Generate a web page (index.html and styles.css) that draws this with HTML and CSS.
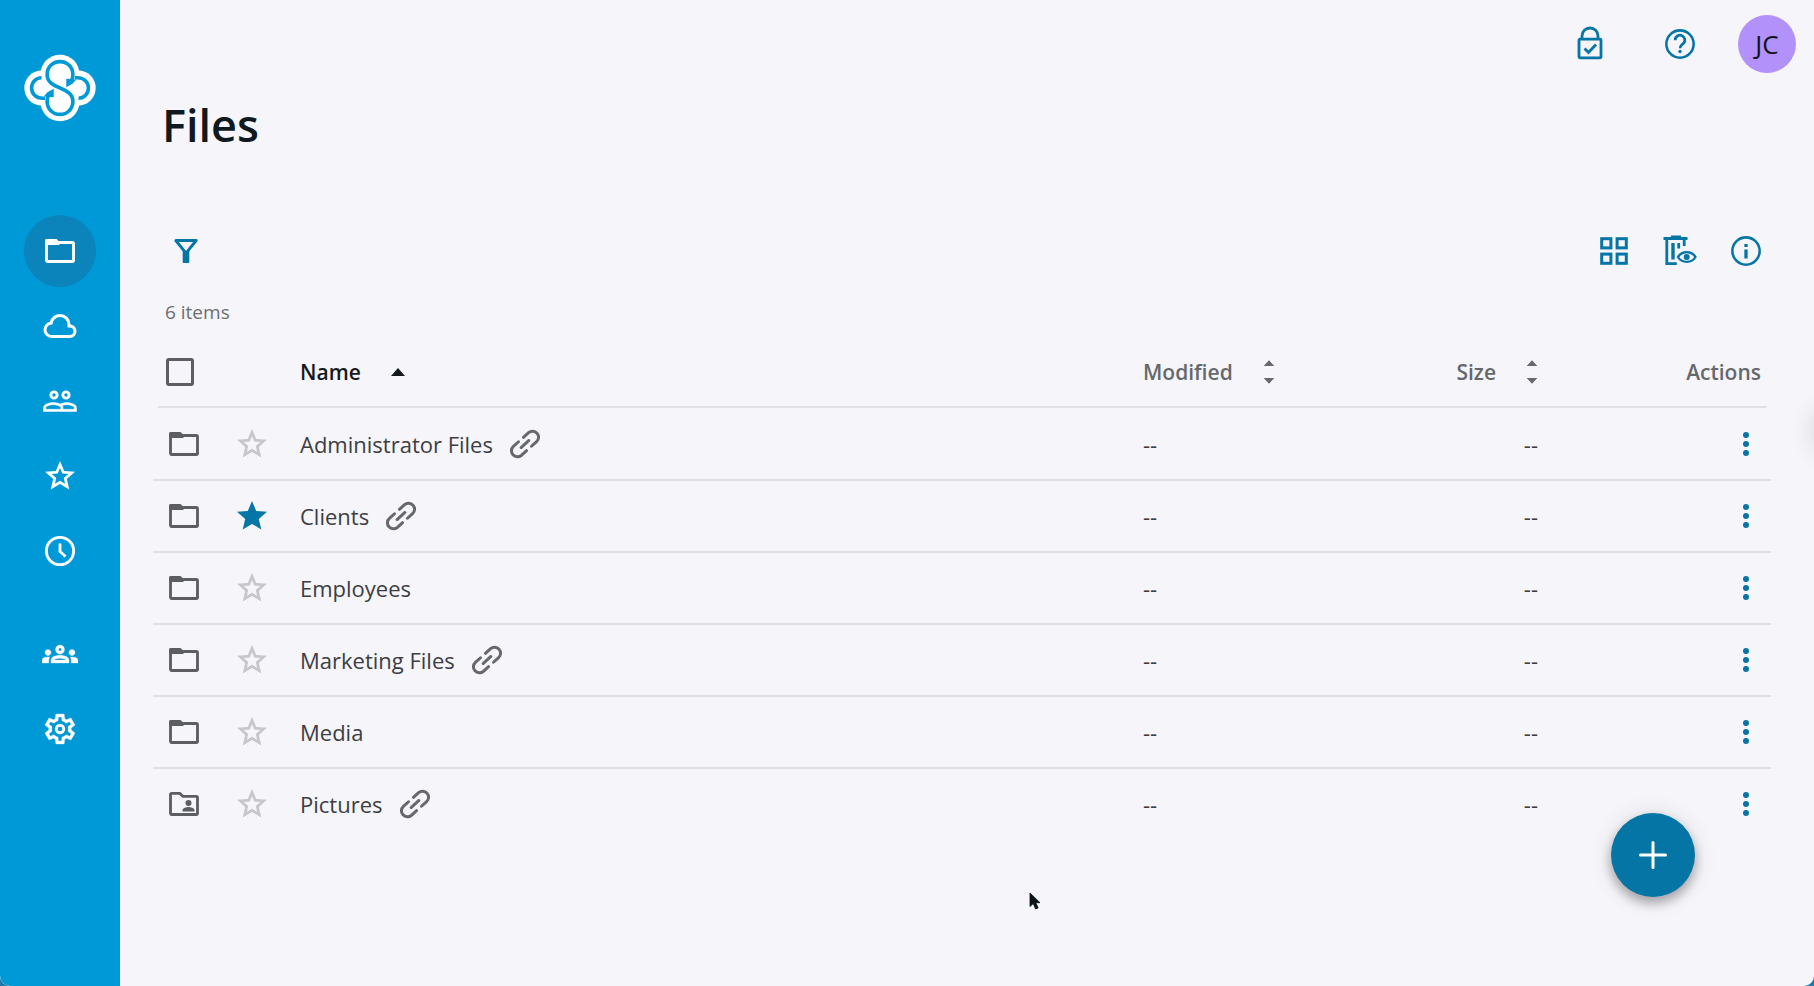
FILE: index.html
```html
<!DOCTYPE html>
<html lang="en">
<head>
    <meta charset="UTF-8">
    <meta name="viewport" content="width=device-width, initial-scale=1.0">
    <title>Files</title>
    <link rel="stylesheet" href="styles.css">
</head>
<body>
    <!-- Shared icons -->
    <svg class="sprite" aria-hidden="true">
        <symbol id="folder" viewBox="0 0 24 24">
            <path d="M3 5h6.5l1.5 2H3z" fill="currentColor" stroke="currentColor" stroke-width="1.9" stroke-linejoin="round"/>
            <rect x="3" y="6.3" width="18" height="12.7" rx="0.8" fill="none" stroke="currentColor" stroke-width="1.9"/>
        </symbol>
        <symbol id="folder-shared" viewBox="0 0 24 24">
            <path d="M3.8 4.9h5.4l2 2h9a.8.8 0 0 1 .8.8v10.5a.8.8 0 0 1-.8.8H3.8a.8.8 0 0 1-.8-.8V5.7a.8.8 0 0 1 .8-.8z" fill="none" stroke="currentColor" stroke-width="1.9"/>
            <circle cx="15" cy="11.3" r="2" fill="currentColor"/>
            <path d="M11 17v-1c0-1.4 2.6-2 4-2s4 .6 4 2v1z" fill="currentColor"/>
        </symbol>
        <symbol id="star" viewBox="0 0 24 24">
            <path d="M22 9.24l-7.19-.62L12 2 9.19 8.63 2 9.24l5.46 4.73L5.82 21 12 17.27 18.18 21l-1.63-7.03L22 9.24zM12 15.1l-3.4 2.05.9-3.85-3-2.6 3.95-.35L12 6.7l1.55 3.65 3.95.35-3 2.6.9 3.85L12 15.1z" fill="currentColor"/>
        </symbol>
        <symbol id="star-full" viewBox="0 0 24 24">
            <path d="M12 17.27L18.18 21l-1.64-7.03L22 9.24l-7.19-.61L12 2 9.19 8.63 2 9.24l5.46 4.73L5.82 21z" fill="currentColor"/>
        </symbol>
        <symbol id="link" viewBox="0 0 24 24">
            <g transform="rotate(-42 12 12)" fill="none" stroke="currentColor" stroke-width="2" stroke-linecap="round">
                <path d="M9.8 8H5.2a4 4 0 0 0 0 8h4.6M14.2 8h4.6a4 4 0 0 1 0 8h-4.6M8.5 12h7"/>
            </g>
        </symbol>
        <symbol id="dots" viewBox="0 0 24 24">
            <g fill="currentColor">
                <circle cx="12" cy="6" r="2"/>
                <circle cx="12" cy="12" r="2"/>
                <circle cx="12" cy="18" r="2"/>
            </g>
        </symbol>
        <symbol id="sort" viewBox="0 0 12 24">
            <path d="M0.7 6L6 0.3 11.3 6zM0.7 18L6 23.7 11.3 18z" fill="currentColor"/>
        </symbol>
    </svg>

    <nav class="sidebar" aria-label="Main">
        <a class="logo" href="#" aria-label="Home">
            <svg viewBox="10 14 218 204">
                <g fill="#fff">
                    <circle cx="119" cy="74" r="59"/>
                    <circle cx="119" cy="158" r="59"/>
                    <circle cx="64" cy="116" r="53"/>
                    <circle cx="174" cy="116" r="53"/>
                </g>
                <g fill="none" stroke="#0099d8" stroke-width="11">
                    <path d="M145 103C154 97 158 87 158 75C158 53 141 36 119 36S80 53 80 75C80 98 99 108 119 116S158 134 158 157C158 179 141 196 119 196S80 179 80 157C80 145 84 135 93 129"/>
                    <path d="M63 85C46 85 33 99 33 116S46 147 66 147H74"/>
                    <path d="M175 147C192 147 205 133 205 116S192 85 172 85H164"/>
                </g>
                <path d="M138 88L168 90 158 102 138 114zM100 144V118L80 130 70 142z" fill="#0099d8"/>
            </svg>
        </a>

        <div class="menu">
            <a class="item active" href="#" aria-label="Files"><svg class="icon"><use href="#folder"/></svg></a>
            <a class="item" href="#" aria-label="Cloud">
                <svg class="icon" viewBox="0 0 24 24"><path fill-rule="evenodd" fill="currentColor" d="M6.5 20Q4.2 20 2.6 18.4 1 16.9 1 14.6 1 12.6 2.2 11.1 3.4 9.6 5.3 9.2 5.9 6.9 7.8 5.4 9.6 4 12 4 14.9 4 17 6 19 8.1 19 11 20.7 11.2 21.9 12.5 23 13.8 23 15.5 23 17.4 21.7 18.7 20.4 20 18.5 20ZM6.5 18h12q1.05 0 1.77-.73.73-.72.73-1.77 0-1.05-.73-1.77Q19.55 13 18.5 13H17v-2q0-2.08-1.46-3.54Q14.08 6 12 6 9.93 6 8.46 7.46 7 8.93 7 11h-.5q-1.45 0-2.47 1.03Q3 13.05 3 14.5q0 1.45 1.03 2.48Q5.05 18 6.5 18Z"/></svg>
            </a>
            <a class="item" href="#" aria-label="People">
                <svg class="icon" viewBox="0 0 24 24"><path fill="currentColor" stroke="currentColor" stroke-width="0.3" d="M16.5 13c-1.2 0-3.07.34-4.5 1-1.43-.67-3.3-1-4.5-1C5.33 13 1 14.08 1 16.25V19h22v-2.75c0-2.17-4.33-3.25-6.5-3.25zm-4 4.5h-10v-1.25c0-.54 2.56-1.75 5-1.75s5 1.21 5 1.75v1.25zm9 0H14v-1.25c0-.46-.2-.86-.52-1.22.88-.3 1.96-.53 3.02-.53 2.44 0 5 1.21 5 1.75v1.25z"/><g fill="none" stroke="currentColor" stroke-width="1.9"><circle cx="8" cy="8" r="2.1"/><circle cx="16" cy="8" r="2.1"/></g></svg>
            </a>
            <a class="item" href="#" aria-label="Starred"><svg class="icon"><use href="#star"/></svg></a>
            <a class="item" href="#" aria-label="Recent">
                <svg class="icon" viewBox="0 0 24 24"><g fill="none" stroke="currentColor" stroke-width="1.9"><circle cx="12" cy="12" r="9.1"/><path d="M12 7v5.3l3.7 3.4"/></g></svg>
            </a>
        </div>

        <div class="menu">
            <a class="item" href="#" aria-label="Groups">
                <svg class="icon" viewBox="0 0 24 24"><path fill="currentColor" stroke="currentColor" stroke-width="0.2" d="M4 13c1.1 0 2-.9 2-2s-.9-2-2-2-2 .9-2 2 .9 2 2 2zm1.13 1.1c-.37-.06-.74-.1-1.13-.1-.99 0-1.93.21-2.78.58C.48 14.9 0 15.62 0 16.43V18h4.5v-1.61c0-.83.23-1.61.63-2.29zM20 13c1.1 0 2-.9 2-2s-.9-2-2-2-2 .9-2 2 .9 2 2 2zm4 3.43c0-.81-.48-1.53-1.22-1.85-.85-.37-1.79-.58-2.78-.58-.39 0-.76.04-1.13.1.4.68.63 1.46.63 2.29V18H24v-1.57zM16.24 13.65c-1.17-.52-2.61-.9-4.24-.9s-3.07.39-4.24.9C6.68 14.13 6 15.21 6 16.39V18h12v-1.61c0-1.18-.68-2.26-1.76-2.74zM8.07 16c.09-.23.13-.39.91-.69.97-.38 1.99-.56 3.02-.56s2.05.18 3.02.56c.77.3.81.46.91.69H8.07zM12 8c.55 0 1 .45 1 1s-.45 1-1 1-1-.45-1-1 .45-1 1-1m0-2c-1.66 0-3 1.34-3 3s1.34 3 3 3 3-1.34 3-3-1.34-3-3-3z"/></svg>
            </a>
            <a class="item" href="#" aria-label="Settings">
                <svg class="icon" viewBox="0 -960 960 960"><path fill="currentColor" stroke="currentColor" stroke-width="8" d="m370-80-16-128q-13-5-24.5-12T307-235l-119 50L78-375l103-78q-1-7-1-13.5v-27q0-6.5 1-13.5L78-585l110-190 119 50q11-8 23-15t24-12l16-128h220l16 128q13 5 24.5 12t22.5 15l119-50 110 190-103 78q1 7 1 13.5v27q0 6.5-2 13.5l103 78-110 190-118-50q-11 8-23 15t-24 12L590-80H370Zm70-80h79l14-106q31-8 57.5-23.5T639-327l99 41 39-68-86-65q5-14 7-29.5t2-31.5q0-16-2-31.5t-7-29.5l86-65-39-68-99 42q-22-23-48.5-38.5T533-694l-13-106h-79l-14 106q-31 8-57.5 23.5T321-633l-99-41-39 68 86 64q-5 15-7 30t-2 32q0 16 2 31t7 30l-86 65 39 68 99-42q22 23 48.5 38.5T427-266l13 106Z"/><circle cx="480" cy="-480" r="100" fill="none" stroke="currentColor" stroke-width="76"/></svg>
            </a>
        </div>
    </nav>

    <main class="content">
        <header class="topbar">
            <button class="icon-button" aria-label="Vault">
                <svg class="icon" viewBox="0 0 36 36"><g fill="none" stroke="currentColor" stroke-width="2.8"><rect x="7" y="13.2" width="22" height="18.6" rx="1.2"/><path d="M10 13v-3a8 8 0 0 1 16 0v3M12.5 22.5l4 4 7.5-8"/></g></svg>
            </button>
            <button class="icon-button" aria-label="Help">
                <svg class="icon" viewBox="0 0 24 24"><circle cx="12" cy="12" r="9.1" fill="none" stroke="currentColor" stroke-width="1.7"/><path d="M8.8 9.5a3.2 3.2 0 1 1 4.9 2.6c-1 .7-1.7 1.2-1.7 2.7" fill="none" stroke="currentColor" stroke-width="1.8"/><circle cx="12" cy="17" r="1.1" fill="currentColor"/></svg>
            </button>
            <button class="avatar" aria-label="Account">JC</button>
        </header>

        <h1 class="title">Files</h1>

        <div class="toolbar">
            <button class="icon-button" aria-label="Filter">
                <svg class="icon" viewBox="0 0 24 24"><path d="M5.2 5h13.6L12 13.4z" fill="none" stroke="currentColor" stroke-width="1.9" stroke-linejoin="round"/><path d="M9.8 12h4.4v7.3a.7.7 0 0 1-.7.7h-3a.7.7 0 0 1-.7-.7z" fill="currentColor"/></svg>
            </button>
            <div class="tools">
                <button class="icon-button" aria-label="Grid view">
                    <svg class="icon" viewBox="0 0 36 36"><g fill="none" stroke="currentColor" stroke-width="3"><rect x="5.7" y="5.7" width="9.2" height="9.2"/><rect x="21.1" y="5.7" width="9.2" height="9.2"/><rect x="5.7" y="21.1" width="9.2" height="9.2"/><rect x="21.1" y="21.1" width="9.2" height="9.2"/></g></svg>
                </button>
                <button class="icon-button" aria-label="Show deleted files">
                    <svg class="icon" viewBox="0 0 36 36"><g fill="none" stroke="currentColor" stroke-width="2.8"><path d="M1.5 5.5h24M9 4h10M4.8 5.5v25.2h10M22.2 5.5v7.5"/><path d="M11 10v16.5" stroke-width="3.4"/><path d="M16.7 10v5.5"/><path d="M16 24c3.8-6.5 13.7-6.5 17.5 0-3.8 6.5-13.7 6.5-17.5 0z" stroke-width="2.3"/></g><circle cx="24.7" cy="24" r="3" fill="currentColor"/></svg>
                </button>
                <button class="icon-button" aria-label="Details">
                    <svg class="icon" viewBox="0 0 24 24"><circle cx="12" cy="12" r="9.1" fill="none" stroke="currentColor" stroke-width="1.7"/><path d="M10.9 11h2.2v6h-2.2zM10.9 7.3h2.2v2.1h-2.2z" fill="currentColor"/></svg>
                </button>
            </div>
        </div>

        <p class="count">6 items</p>

        <table class="files">
            <thead>
                <tr>
                    <th class="col-icon"><input class="check" type="checkbox" aria-label="Select all"></th>
                    <th class="col-star"></th>
                    <th class="col-name"><button class="sort sorted">Name <svg class="up" viewBox="0 0 14 8"><path d="M0 8L7 0l7 8z" fill="currentColor"/></svg></button></th>
                    <th class="col-modified"><button class="sort">Modified <svg class="arrows"><use href="#sort"/></svg></button></th>
                    <th class="col-size"><button class="sort">Size <svg class="arrows"><use href="#sort"/></svg></button></th>
                    <th class="col-actions">Actions</th>
                </tr>
            </thead>
            <tbody>
                <tr>
                    <td class="col-icon"><svg class="icon"><use href="#folder"/></svg></td>
                    <td class="col-star"><button class="icon-button star" aria-label="Star"><svg class="icon"><use href="#star"/></svg></button></td>
                    <td class="col-name"><div class="name"><a href="#">Administrator Files</a><svg class="icon"><use href="#link"/></svg></div></td>
                    <td class="col-modified">--</td>
                    <td class="col-size">--</td>
                    <td class="col-actions"><button class="icon-button" aria-label="More"><svg class="icon"><use href="#dots"/></svg></button></td>
                </tr>
                <tr>
                    <td class="col-icon"><svg class="icon"><use href="#folder"/></svg></td>
                    <td class="col-star"><button class="icon-button" aria-label="Unstar"><svg class="icon"><use href="#star-full"/></svg></button></td>
                    <td class="col-name"><div class="name"><a href="#">Clients</a><svg class="icon"><use href="#link"/></svg></div></td>
                    <td class="col-modified">--</td>
                    <td class="col-size">--</td>
                    <td class="col-actions"><button class="icon-button" aria-label="More"><svg class="icon"><use href="#dots"/></svg></button></td>
                </tr>
                <tr>
                    <td class="col-icon"><svg class="icon"><use href="#folder"/></svg></td>
                    <td class="col-star"><button class="icon-button star" aria-label="Star"><svg class="icon"><use href="#star"/></svg></button></td>
                    <td class="col-name"><div class="name"><a href="#">Employees</a></div></td>
                    <td class="col-modified">--</td>
                    <td class="col-size">--</td>
                    <td class="col-actions"><button class="icon-button" aria-label="More"><svg class="icon"><use href="#dots"/></svg></button></td>
                </tr>
                <tr>
                    <td class="col-icon"><svg class="icon"><use href="#folder"/></svg></td>
                    <td class="col-star"><button class="icon-button star" aria-label="Star"><svg class="icon"><use href="#star"/></svg></button></td>
                    <td class="col-name"><div class="name"><a href="#">Marketing Files</a><svg class="icon"><use href="#link"/></svg></div></td>
                    <td class="col-modified">--</td>
                    <td class="col-size">--</td>
                    <td class="col-actions"><button class="icon-button" aria-label="More"><svg class="icon"><use href="#dots"/></svg></button></td>
                </tr>
                <tr>
                    <td class="col-icon"><svg class="icon"><use href="#folder"/></svg></td>
                    <td class="col-star"><button class="icon-button star" aria-label="Star"><svg class="icon"><use href="#star"/></svg></button></td>
                    <td class="col-name"><div class="name"><a href="#">Media</a></div></td>
                    <td class="col-modified">--</td>
                    <td class="col-size">--</td>
                    <td class="col-actions"><button class="icon-button" aria-label="More"><svg class="icon"><use href="#dots"/></svg></button></td>
                </tr>
                <tr>
                    <td class="col-icon"><svg class="icon"><use href="#folder-shared"/></svg></td>
                    <td class="col-star"><button class="icon-button star" aria-label="Star"><svg class="icon"><use href="#star"/></svg></button></td>
                    <td class="col-name"><div class="name"><a href="#">Pictures</a><svg class="icon"><use href="#link"/></svg></div></td>
                    <td class="col-modified">--</td>
                    <td class="col-size">--</td>
                    <td class="col-actions"><button class="icon-button" aria-label="More"><svg class="icon"><use href="#dots"/></svg></button></td>
                </tr>
            </tbody>
        </table>
    </main>

    <!-- Floating over the page -->
    <button class="add" aria-label="Add">
        <svg viewBox="0 0 28 28"><path d="M14 1.5v25M1.5 14h25" stroke="currentColor" stroke-width="3" stroke-linecap="round"/></svg>
    </button>
    <div class="side-tab"></div>
    <svg class="cursor" viewBox="0 0 12 19"><path d="M1 1v13.5l3.2-2.9 2.4 5.4 2.6-1.1-2.4-5.2h4.2z" fill="#0b1116" stroke="#0b1116" stroke-width="0.8"/></svg>
</body>
</html>
```
FILE: styles.css
```css
* {
    box-sizing: border-box;
}

html {
    background-color: #1c7ba6;
}

body {
    display: flex;
    min-height: 100vh;
    margin: 0;
    border-radius: 0 0 10px 10px;
    background-color: #f5f5fa;
    color: #3c3e42;
    font-family: "Open Sans", "Noto Sans", sans-serif;
    font-size: 22px;
    overflow: hidden;
}

button {
    border: none;
    padding: 0;
    background: none;
    color: inherit;
    font: inherit;
    cursor: pointer;
}

a {
    color: inherit;
    text-decoration: none;
}

.sprite {
    position: absolute;
    width: 0;
    height: 0;
}

.icon {
    display: block;
    flex: none;
    width: 36px;
    height: 36px;
}

.icon-button {
    display: flex;
    color: #0575a6;
}

/* Sidebar */
.sidebar {
    display: flex;
    flex-direction: column;
    align-items: center;
    flex: none;
    width: 120px;
    padding-top: 54px;
    border-bottom-left-radius: 10px;
    background-color: #0099d8;
    color: #fff;
}

.logo {
    margin-bottom: 93px;
}

.logo svg {
    display: block;
    width: 72px;
    height: 68px;
}

.menu {
    display: flex;
    flex-direction: column;
    gap: 3px;
    margin-bottom: 31px;
}

.item {
    display: flex;
    align-items: center;
    justify-content: center;
    width: 72px;
    height: 72px;
    border-radius: 50%;
}

.item.active {
    background-color: #0a84ba;
}

/* Content */
.content {
    flex: 1;
    min-width: 0;
    padding: 15px 43px 0 33px;
}

.topbar {
    display: flex;
    align-items: center;
    justify-content: flex-end;
    gap: 54px;
    margin-right: -25px;
}

.avatar {
    width: 58px;
    height: 58px;
    margin-left: -14px;
    border-radius: 50%;
    background-color: #b291fa;
    color: #101418;
    font-size: 26px;
}

.title {
    margin: 20px 0 0 9px;
    color: #101820;
    font-size: 45px;
    font-weight: 600;
    line-height: 64px;
}

.toolbar {
    display: flex;
    justify-content: space-between;
    margin-top: 76px;
    padding: 0 7px 0 15px;
}

.tools {
    display: flex;
    gap: 30px;
}

.count {
    margin: 31px 0 0 12px;
    color: #6c6e72;
    font-size: 19px;
    line-height: 24px;
}

/* File list */
.files {
    width: 100%;
    margin-top: 16px;
    border-collapse: collapse;
    table-layout: fixed;
}

.files th,
.files td {
    padding: 0;
    text-align: left;
}

.files th {
    height: 68px;
    padding-bottom: 4px;
    color: #66686c;
    font-size: 21px;
    font-weight: 600;
}

.files thead tr {
    background: linear-gradient(#dfdfe5, #dfdfe5) center bottom / calc(100% - 9px) 2px no-repeat;
}

.files td {
    height: 72px;
    border-bottom: 2px solid #dfdfe5;
}

.files tbody tr:last-child td {
    border-bottom-color: transparent;
}

.files .col-icon {
    width: 81px;
    padding-left: 13px;
    color: #5c5e61;
}

.files .col-star {
    width: 66px;
}

.files .col-modified {
    width: 252px;
}

.files .col-size {
    width: 143px;
    text-align: right;
}

.files .col-actions {
    width: 233px;
    padding-right: 10px;
    text-align: right;
}

.files .col-actions .icon-button {
    margin: 0 -3px 0 auto;
}

.star {
    color: #c6c7cb;
}

.name {
    display: flex;
    align-items: center;
    gap: 14px;
}

.name svg {
    color: #66686c;
}

.sort {
    display: inline-flex;
    align-items: center;
    gap: 30px;
}

.sorted {
    color: #15191e;
}

.up {
    width: 14px;
    height: 8px;
}

.arrows {
    width: 12px;
    height: 24px;
}

.check {
    display: block;
    appearance: none;
    width: 28px;
    height: 28px;
    margin: 0;
    border: 3px solid #5c5e61;
    border-radius: 3px;
}

/* Overlays */
.add {
    position: fixed;
    right: 119px;
    bottom: 89px;
    display: flex;
    align-items: center;
    justify-content: center;
    width: 84px;
    height: 84px;
    border-radius: 50%;
    background-color: #0575a6;
    color: #fff;
    box-shadow: 0 6px 12px rgba(0, 0, 0, 0.3), 0 2px 24px rgba(0, 0, 0, 0.12);
}

.add svg {
    width: 28px;
    height: 28px;
}

.side-tab {
    position: fixed;
    top: 406px;
    right: -30px;
    width: 30px;
    height: 44px;
    border-radius: 24px;
    box-shadow: 0 2px 26px rgba(0, 0, 0, 0.14);
}

.cursor {
    position: fixed;
    top: 892px;
    left: 1029px;
    width: 12px;
    height: 19px;
}
```
